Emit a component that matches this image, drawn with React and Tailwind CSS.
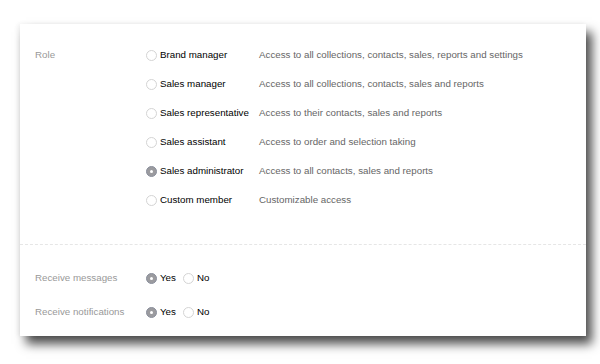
import React from 'react';

const roles = [
  { name: 'Brand manager', desc: 'Access to all collections, contacts, sales, reports and settings' },
  { name: 'Sales manager', desc: 'Access to all collections, contacts, sales and reports' },
  { name: 'Sales representative', desc: 'Access to their contacts, sales and reports' },
  { name: 'Sales assistant', desc: 'Access to order and selection taking' },
  { name: 'Sales administrator', desc: 'Access to all contacts, sales and reports', checked: true },
  { name: 'Custom member', desc: 'Customizable access' },
];

const Radio = ({ checked }) =>
  checked ? (
    <span className="w-[11px] h-[11px] rounded-full bg-[#9b9b9f] border border-[#8a8f9c] flex items-center justify-center shrink-0">
      <span className="w-[3px] h-[3px] rounded-full bg-white" />
    </span>
  ) : (
    <span className="w-[11px] h-[11px] rounded-full bg-white border border-[#d4d4d4] shrink-0" />
  );

const YesNo = ({ label }) => (
  <div className="flex items-center h-[34px]">
    <div className="w-[111px] text-[#999] text-[9.75px]">{label}</div>
    <div className="flex items-center gap-[3px]">
      <Radio checked />
      <span className="text-[9.75px] text-black">Yes</span>
    </div>
    <div className="flex items-center gap-[3px] ml-[7px]">
      <Radio />
      <span className="text-[9.75px] text-black">No</span>
    </div>
  </div>
);

export default function App() {
  return (
    <div className="w-[600px] h-[364px] bg-white pt-[24px] pl-[20px] font-['Liberation_Sans',Arial,sans-serif]">
      <div className="w-[566px] h-[312px] bg-white shadow-[6px_8px_10px_rgba(0,0,0,0.7),-2px_0_5px_rgba(0,0,0,0.06)] flex flex-col">
        <div className="pt-[17px] pb-[29px] pl-[15px] flex">
          <div className="w-[111px] text-[#999] text-[9.75px] leading-[14px] pt-[7px]">Role</div>
          <div className="flex flex-col">
            {roles.map((r) => (
              <div key={r.name} className="flex items-center h-[29px]">
                <div className="w-[113px] flex items-center gap-[3px]">
                  <Radio checked={r.checked} />
                  <span className="text-[9.75px] text-black whitespace-nowrap">{r.name}</span>
                </div>
                <span className="text-[9.75px] text-[#666] whitespace-nowrap">{r.desc}</span>
              </div>
            ))}
          </div>
        </div>
        <div className="border-t border-dashed border-[#e6e6e6]" />
        <div className="pt-[16px] pl-[15px] flex flex-col">
          <YesNo label="Receive messages" />
          <YesNo label="Receive notifications" />
        </div>
      </div>
    </div>
  );
}
